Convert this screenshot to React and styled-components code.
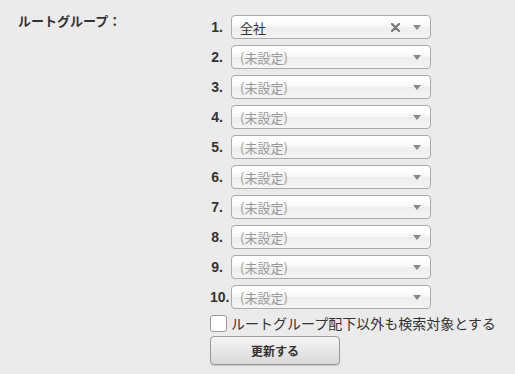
import React from 'react'
import styled, { createGlobalStyle } from 'styled-components'

const GlobalStyle = createGlobalStyle`
  html, body {
    margin: 0;
    padding: 0;
    background: #ebebeb;
  }
  body {
    font-family: "Liberation Sans", "Noto Sans CJK JP", sans-serif;
    color: #333;
  }
`

const Page = styled.div`
  display: flex;
  align-items: flex-start;
  min-height: 374px;
  box-sizing: border-box;
`

const FieldLabel = styled.div`
  width: 210px;
  box-sizing: border-box;
  padding: 11px 0 0 18px;
  font-size: 13px;
  line-height: 20px;
  font-weight: bold;
  color: #333;
  font-family: "Noto Sans CJK JP", sans-serif;
`

const Field = styled.div`
  display: flex;
  flex-direction: column;
  padding-top: 15px;
`

const Row = styled.div`
  display: flex;
  align-items: center;
  height: 24px;
  margin-bottom: 6px;
`

const Num = styled.span`
  width: 21px;
  box-sizing: border-box;
  padding-right: 8px;
  text-align: right;
  white-space: nowrap;
  font-size: 14px;
  font-weight: bold;
  color: #333;
`

const Select = styled.div`
  display: flex;
  align-items: center;
  width: 200px;
  height: 24px;
  box-sizing: border-box;
  border: 1px solid #aaa;
  border-radius: 4px;
  padding-left: 8px;
  background: linear-gradient(#ffffff 20%, #f6f6f6 50%, #eeeeee 52%, #f4f4f4 100%);
  font-family: "Noto Sans CJK JP", sans-serif;
  font-size: 13px;
  color: ${p => (p.$empty ? '#999' : '#333')};
`

const Value = styled.span`
  flex: 1;
`

const Clear = styled.svg`
  width: 9px;
  height: 9px;
  margin-right: 13px;
`

const Arrow = styled.span`
  width: 0;
  height: 0;
  margin-right: 9px;
  border-left: 4px solid transparent;
  border-right: 4px solid transparent;
  border-top: 5px solid #888;
`

const CheckRow = styled.label`
  display: flex;
  align-items: center;
  gap: 4px;
  height: 18px;
  margin-top: -1px;
  font-family: "Noto Sans CJK JP", sans-serif;
  font-size: 14px;
  color: #333;
`

const Box = styled.span`
  width: 17px;
  height: 17px;
  box-sizing: border-box;
  border: 1px solid #999;
  border-radius: 3px;
  background: #fff;
`

const Button = styled.button`
  width: 130px;
  height: 29px;
  margin-top: 4px;
  border: 1px solid #999;
  border-radius: 4px;
  background: linear-gradient(#f5f5f5, #d9d9d9);
  font-family: "Noto Sans CJK JP", sans-serif;
  font-size: 12px;
  font-weight: bold;
  color: #333;
  box-shadow: 0 1px 1px rgba(0, 0, 0, 0.15);
`

const groups = ['全社', null, null, null, null, null, null, null, null, null]

export default function App() {
  return (
    <>
      <GlobalStyle />
      <Page>
        <FieldLabel>ルートグループ：</FieldLabel>
        <Field>
          {groups.map((g, i) => (
            <Row key={i}>
              <Num>{i + 1}.</Num>
              <Select $empty={!g}>
                <Value>{g || '(未設定)'}</Value>
                {g && (
                  <Clear viewBox="0 0 9 9">
                    <path d="M1 1L8 8M8 1L1 8" stroke="#777" strokeWidth="2.2" strokeLinecap="round" />
                  </Clear>
                )}
                <Arrow />
              </Select>
            </Row>
          ))}
          <CheckRow>
            <Box />
            ルートグループ配下以外も検索対象とする
          </CheckRow>
          <Button>更新する</Button>
        </Field>
      </Page>
    </>
  )
}
